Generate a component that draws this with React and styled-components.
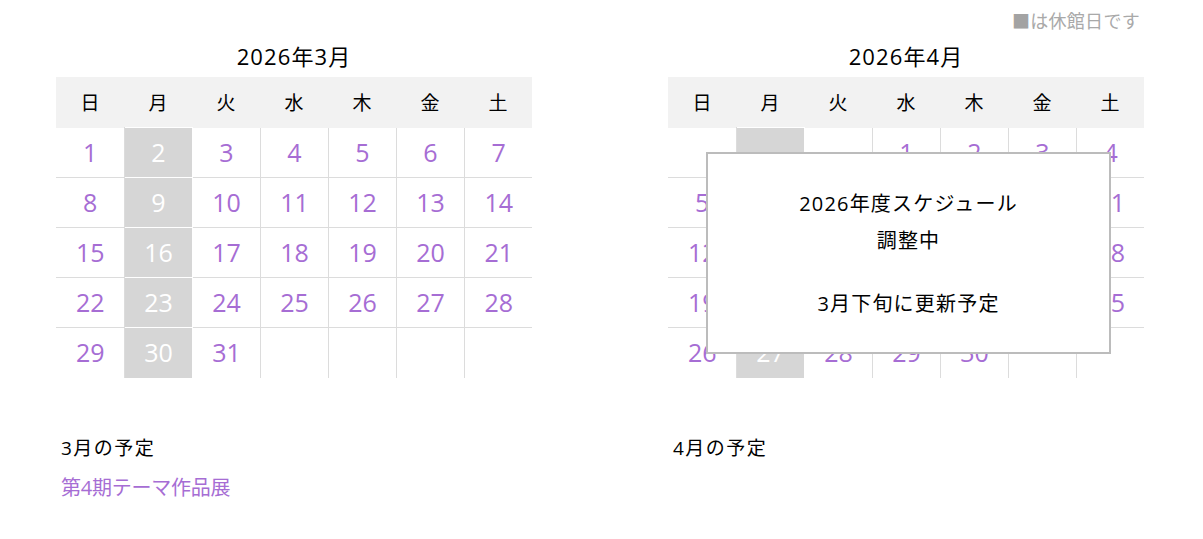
import React from "react";
import styled, { createGlobalStyle } from "styled-components";

const Global = createGlobalStyle`
  html, body { margin: 0; padding: 0; background: #fff; }
  body {
    font-family: "Open Sans", "Noto Sans CJK JP", sans-serif;
    color: #000;
  }
`;

const PURPLE = "#a66dd4";
const CLOSED = "#d6d6d6";
const LINE = "#dcdcdc";

const Page = styled.div`
  width: 1203px;
  height: 539px;
  box-sizing: border-box;
  padding: 8px 63px 0 56px;
  display: flex;
  flex-direction: column;
`;

const Notice = styled.div`
  align-self: flex-end;
  font-size: 18px;
  line-height: 26px;
  color: #a9a9a9;
  letter-spacing: 0.3px;
`;

const Square = styled.span`
  color: #a3a3a3;
`;

const Columns = styled.div`
  display: flex;
  gap: 136px;
  margin-top: 5px;
`;

const Column = styled.div`
  width: 476px;
  display: flex;
  flex-direction: column;
`;

const Title = styled.div`
  text-align: center;
  font-size: 22px;
  line-height: 34px;
  letter-spacing: 1.1px;
  height: 38px;
`;

const CalWrap = styled.div`
  position: relative;
`;

const Table = styled.table`
  width: 476px;
  border-collapse: collapse;
  table-layout: fixed;
`;

const Th = styled.th`
  width: 68px;
  height: 50px;
  padding: 0;
  background: #f2f2f2;
  font-weight: 400;
  font-size: 19px;
`;

const Td = styled.td`
  height: 50px;
  padding: 0 0 1px 1px;
  box-sizing: border-box;
  text-align: center;
  font-size: 25px;
  color: ${(p) => (p.$closed ? "#fff" : PURPLE)};
  background: ${(p) => (p.$closed ? CLOSED : "transparent")};
  border-right: ${(p) => (p.$lastCol ? "none" : `1px solid ${p.$closed ? "#fff" : LINE}`)};
  border-bottom: ${(p) => (p.$lastRow ? "none" : `1px solid ${p.$closed ? "#fff" : LINE}`)};
  border-top: ${(p) => (p.$firstRow && p.$closed ? "1px solid #fff" : "none")};
`;

const Overlay = styled.div`
  position: absolute;
  left: 38px;
  top: 75px;
  width: 405px;
  height: 202px;
  box-sizing: border-box;
  background: #fff;
  border: 2px solid #bcbcbc;
  display: flex;
  flex-direction: column;
  align-items: center;
  padding-top: 31px;
  font-size: 20px;
  letter-spacing: 1.2px;
`;

const OverlayLine = styled.div`
  line-height: 37px;
  height: ${(p) => (p.$blank ? "26px" : "37px")};
`;

const Schedule = styled.div`
  margin-top: 56px;
  padding-left: 5px;
  display: flex;
  flex-direction: column;
  gap: 12px;
`;

const ScheduleHead = styled.div`
  font-size: 19px;
  line-height: 28px;
  letter-spacing: 1.5px;
`;

const Event = styled.div`
  font-size: 20px;
  line-height: 28px;
  color: ${PURPLE};
  letter-spacing: -0.25px;
`;

const WEEK = ["日", "月", "火", "水", "木", "金", "土"];

function buildWeeks(offset, days) {
  const cells = [];
  for (let i = 0; i < offset; i++) cells.push(null);
  for (let d = 1; d <= days; d++) cells.push(d);
  while (cells.length % 7) cells.push(null);
  const weeks = [];
  for (let i = 0; i < cells.length; i += 7) weeks.push(cells.slice(i, i + 7));
  return weeks;
}

function Calendar({ title, offset, days, children }) {
  const weeks = buildWeeks(offset, days);
  return (
    <>
      <Title>{title}</Title>
      <CalWrap>
        <Table>
          <thead>
            <tr>
              {WEEK.map((w) => (
                <Th key={w}>{w}</Th>
              ))}
            </tr>
          </thead>
          <tbody>
            {weeks.map((wk, ri) => (
              <tr key={ri}>
                {wk.map((d, ci) => (
                  <Td
                    key={ci}
                    $closed={ci === 1}
                    $lastCol={ci === 6}
                    $lastRow={ri === weeks.length - 1}
                    $firstRow={ri === 0}
                  >
                    {d ?? ""}
                  </Td>
                ))}
              </tr>
            ))}
          </tbody>
        </Table>
        {children}
      </CalWrap>
    </>
  );
}

export default function App() {
  return (
    <Page>
      <Global />
      <Notice>
        <Square>■</Square>は休館日です
      </Notice>
      <Columns>
        <Column>
          <Calendar title="2026年3月" offset={0} days={31} />
          <Schedule>
            <ScheduleHead>3月の予定</ScheduleHead>
            <Event>第4期テーマ作品展</Event>
          </Schedule>
        </Column>
        <Column>
          <Calendar title="2026年4月" offset={3} days={30}>
            <Overlay>
              <OverlayLine>2026年度スケジュール</OverlayLine>
              <OverlayLine>調整中</OverlayLine>
              <OverlayLine $blank />
              <OverlayLine>3月下旬に更新予定</OverlayLine>
            </Overlay>
          </Calendar>
          <Schedule>
            <ScheduleHead>4月の予定</ScheduleHead>
          </Schedule>
        </Column>
      </Columns>
    </Page>
  );
}
